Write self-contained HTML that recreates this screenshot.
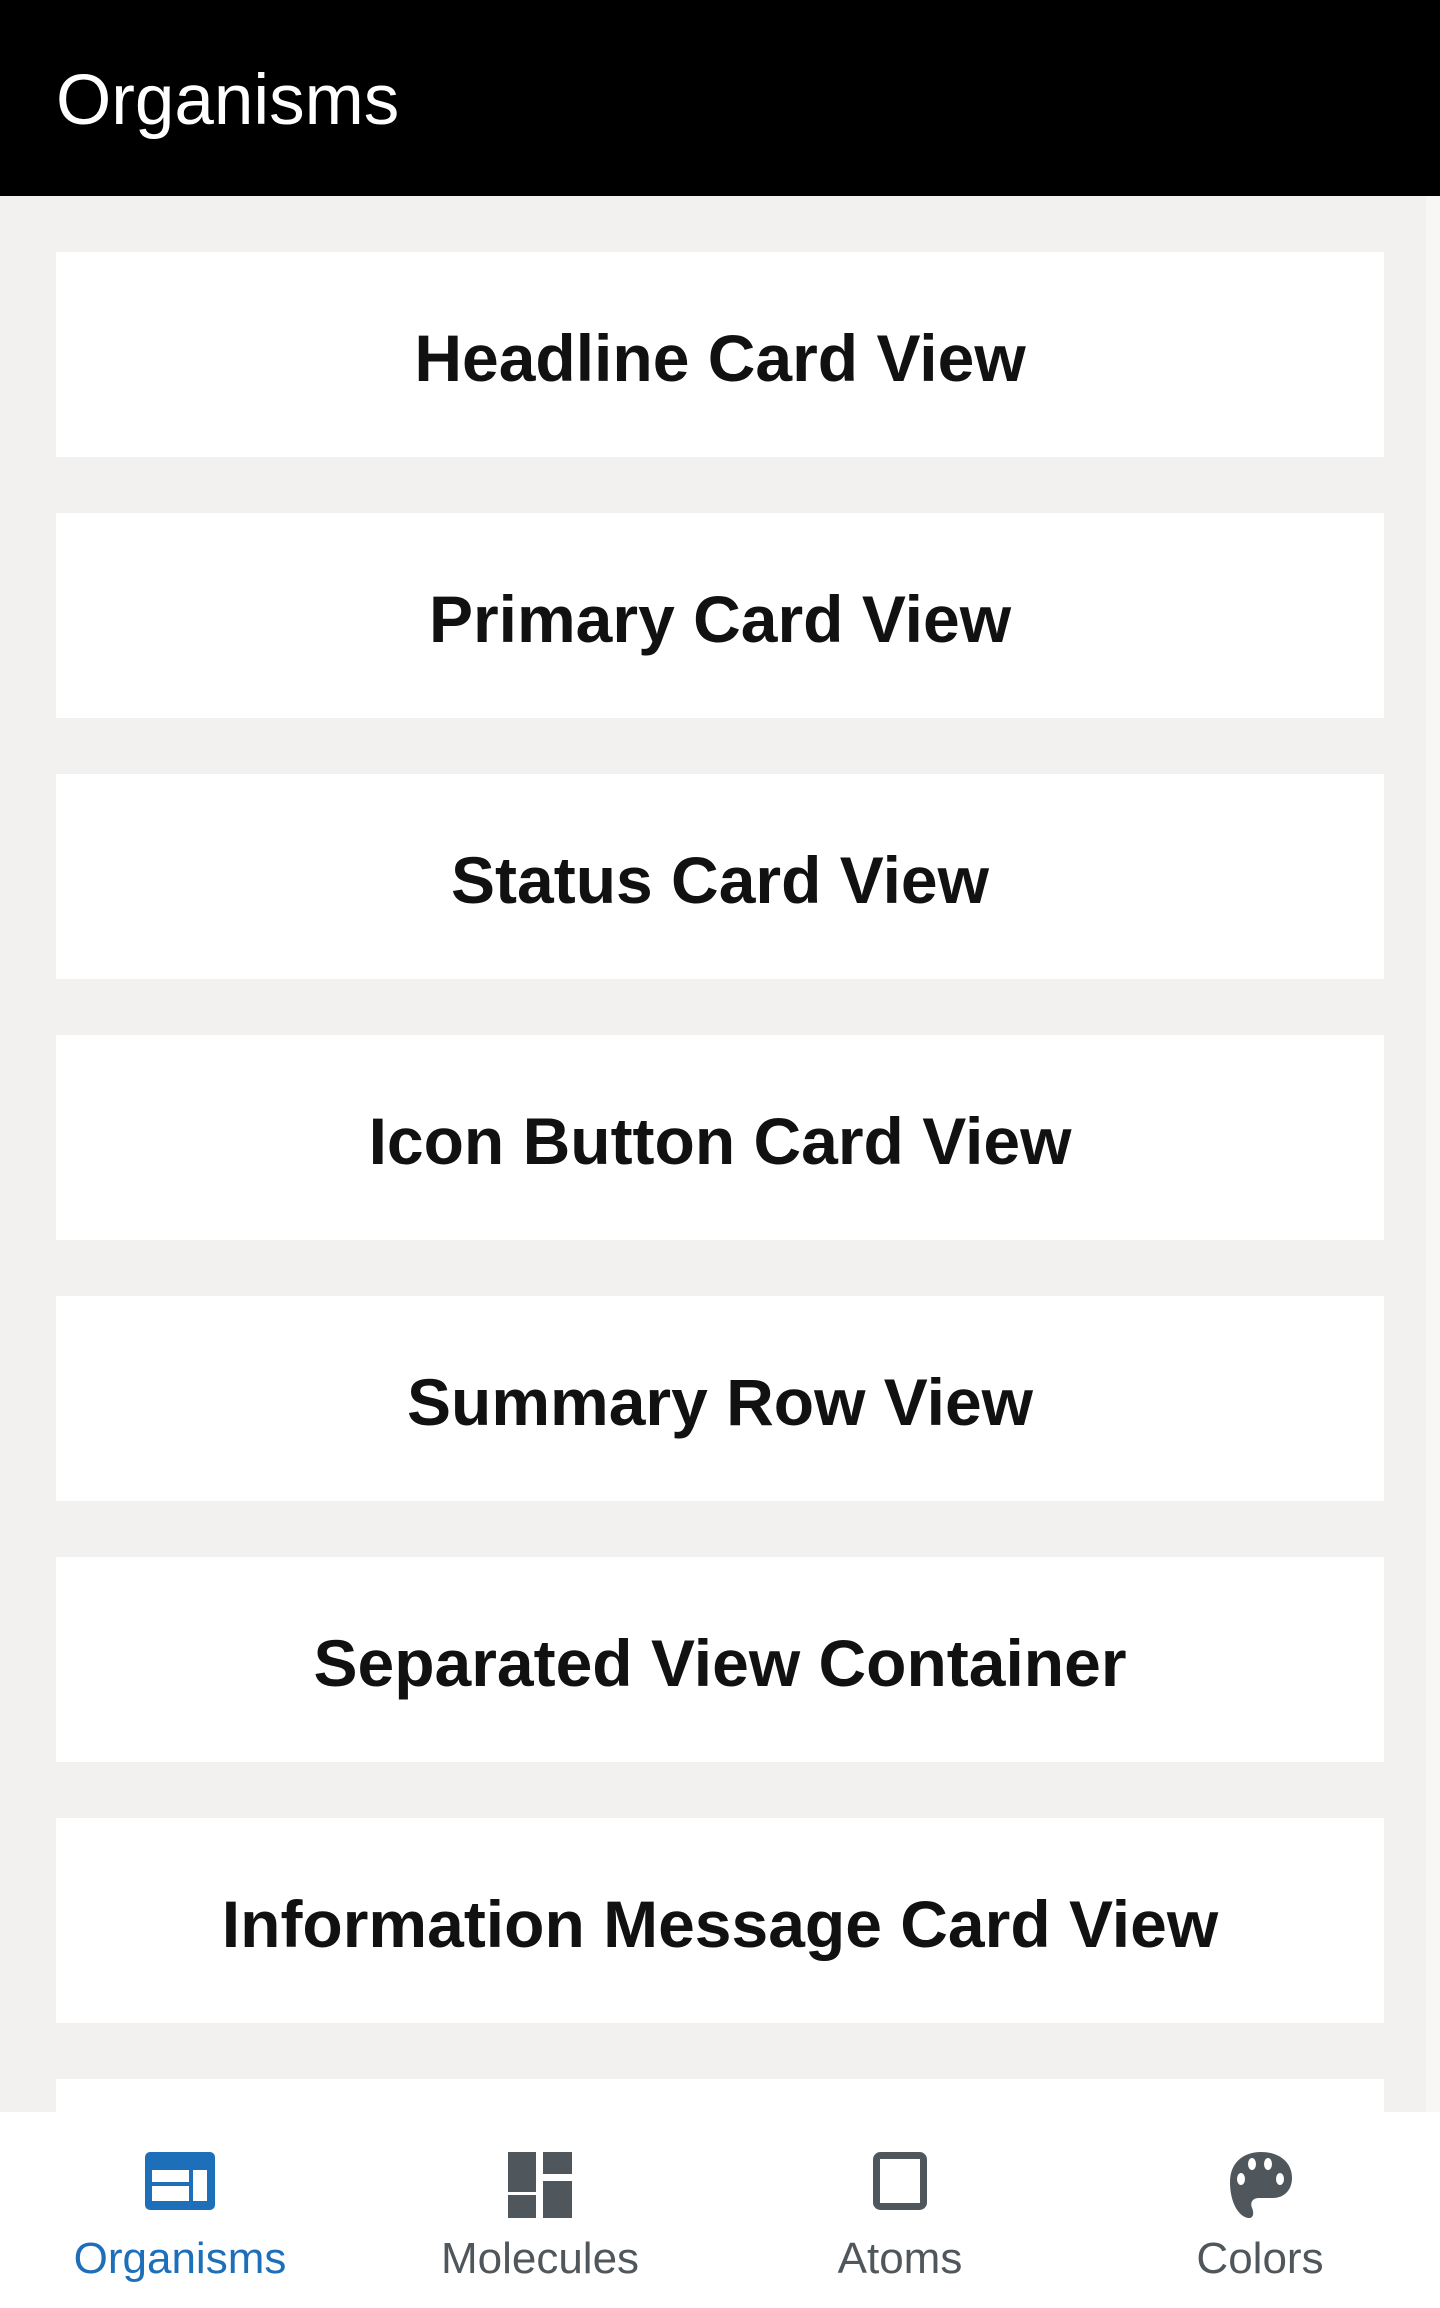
<!DOCTYPE html>
<html><head><style>
body{margin:0;width:1440px;height:2308px;position:relative;overflow:hidden;background:#f2f1ef;font-family:"Liberation Sans",Roboto,sans-serif;}
.hdr{position:absolute;left:0;top:0;width:1440px;height:196px;background:#000;color:#fff;font-size:71px;line-height:202px;padding-left:56px;box-sizing:border-box;}
.sb{position:absolute;left:1426px;top:196px;width:14px;height:1916px;background:#f8f7f6;}
.card{position:absolute;left:56px;width:1328px;height:205px;background:#fff;display:flex;align-items:center;justify-content:center;font-weight:bold;font-size:66px;color:#111;padding-top:6px;box-sizing:border-box;}
.nav{position:absolute;left:0;top:2112px;width:1440px;height:196px;background:#fff;}
.it{position:absolute;top:0;width:360px;text-align:center;}
.it svg{position:absolute;top:40px;}
.it span{position:absolute;top:122px;left:0;width:100%;font-size:44px;color:#50575c;}
</style></head><body>
<div class="hdr">Organisms</div>
<div class="sb"></div>
<div class="card" style="top:252px">Headline Card View</div>
<div class="card" style="top:513px">Primary Card View</div>
<div class="card" style="top:774px">Status Card View</div>
<div class="card" style="top:1035px">Icon Button Card View</div>
<div class="card" style="top:1296px">Summary Row View</div>
<div class="card" style="top:1557px">Separated View Container</div>
<div class="card" style="top:1818px">Information Message Card View</div>
<div class="card" style="top:2079px"></div>
<div class="nav">
 <div class="it" style="left:0">
  <svg style="left:145px" width="70" height="58" viewBox="0 0 70 58"><rect x="0" y="0" width="70" height="58" rx="5" fill="#1e6fba"/><rect x="7" y="18" width="37" height="12" fill="#fff"/><rect x="7" y="34" width="37" height="15" fill="#fff"/><rect x="48" y="18" width="14" height="31" fill="#fff"/></svg>
  <span style="color:#1e6fba">Organisms</span></div>
 <div class="it" style="left:360px">
  <svg style="left:148px" width="64" height="66" viewBox="0 0 64 66"><rect x="0" y="0" width="28" height="66" fill="#50575c"/><rect x="0" y="40" width="28" height="3" fill="#fff"/><rect x="35" y="0" width="29" height="22" fill="#50575c"/><rect x="35" y="29" width="29" height="37" fill="#50575c"/></svg>
  <span>Molecules</span></div>
 <div class="it" style="left:720px">
  <svg style="left:153px" width="54" height="58" viewBox="0 0 54 58"><rect x="3.5" y="3.5" width="47" height="51" rx="4" fill="none" stroke="#50575c" stroke-width="7"/></svg>
  <span>Atoms</span></div>
 <div class="it" style="left:1080px">
  <svg style="left:150px" width="62" height="66" viewBox="0 0 62 66"><path d="M31 0C14 0 0 10 0 30c0 20 8 34 18 36 6 1 6-6 4-10-2-5 0-10 7-10h14c11 0 19-8 19-20C62 10 49 0 31 0z" fill="#50575c"/><ellipse cx="22" cy="12" rx="4" ry="6" fill="#fff"/><ellipse cx="38" cy="12" rx="4" ry="6" fill="#fff"/><ellipse cx="11" cy="27" rx="4" ry="6" fill="#fff"/><ellipse cx="50" cy="27" rx="4" ry="6" fill="#fff"/></svg>
  <span>Colors</span></div>
</div>
</body></html>
